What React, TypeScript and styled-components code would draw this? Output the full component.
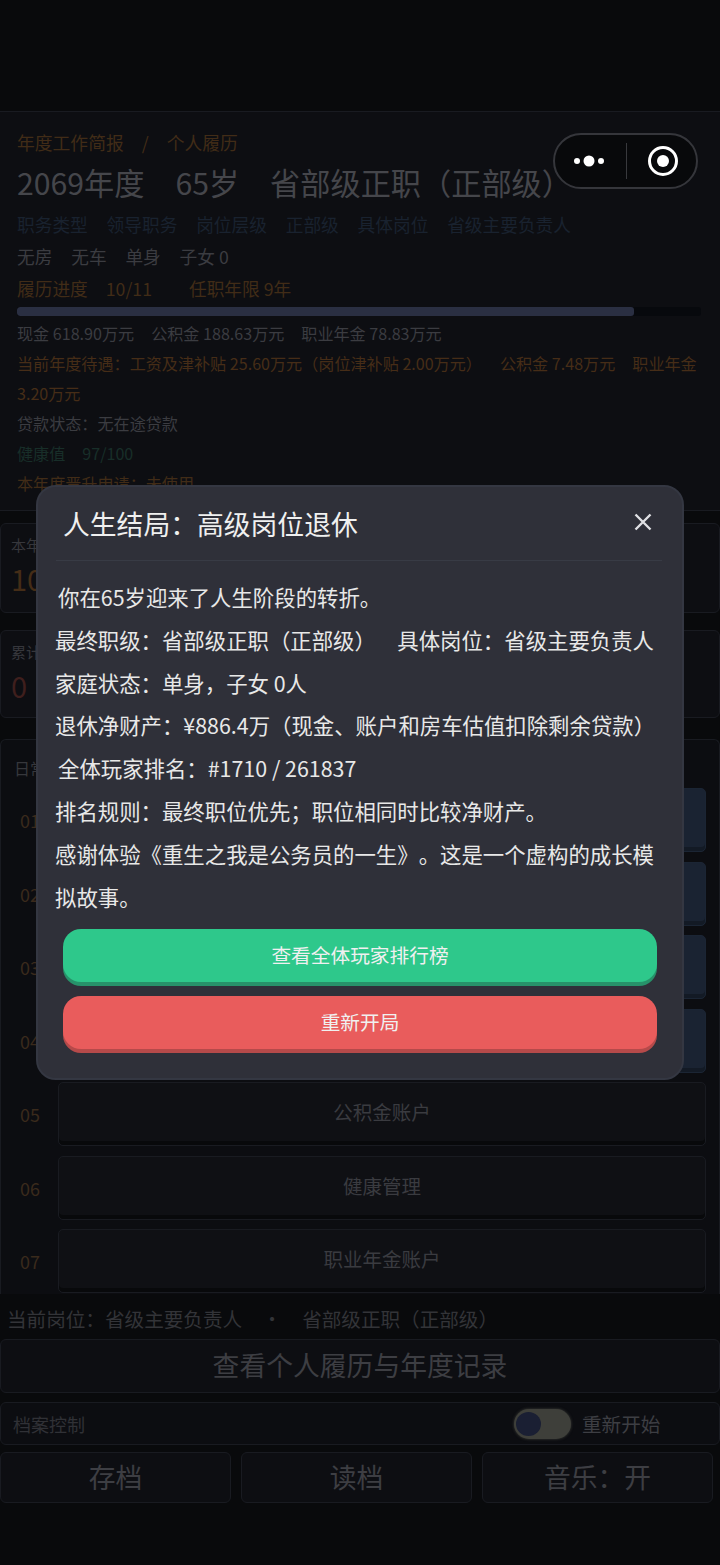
import React from "react";
import styled, { createGlobalStyle } from "styled-components";

const Global = createGlobalStyle`
  html, body { margin: 0; padding: 0; background: #090a0c; }
  * { box-sizing: border-box; }
  body { font-family: "Noto Sans CJK SC", "Noto Sans", sans-serif; text-spacing-trim: space-all; }
`;

const Page = styled.div`
  position: relative;
  width: 720px;
  height: 1565px;
  overflow: hidden;
  background: #090a0c;
  padding-top: 111px;
  display: flex;
  flex-direction: column;
`;

const ProfilePanel = styled.section`
  height: 400px;
  background: #0d0e12;
  border-top: 1px solid #191b21;
  border-bottom: 1px solid #191b21;
  padding: 15px 17px 0;
  overflow: hidden;
  flex: none;
`;

const Line = styled.div<{ $color?: string; $size?: number; $h?: number; $gap?: number }>`
  display: flex;
  gap: ${(p) => p.$gap ?? 0}px;
  white-space: pre;
  color: ${(p) => p.$color ?? "#3b3c41"};
  font-size: ${(p) => p.$size ?? 17.7}px;
  height: ${(p) => p.$h ?? 30}px;
  line-height: ${(p) => p.$h ?? 30}px;
`;

const TitleLine = styled(Line)`
  line-height: 50px;
`;

const WrapText = styled.div`
  color: #462d17;
  font-size: 16.1px;
  line-height: 30px;
  width: 686px;
`;

const Spaced = styled.span<{ $left: number }>`
  margin-left: ${(p) => p.$left}px;
`;

const Track = styled.div`
  height: 9px;
  width: 684px;
  border-radius: 3px;
  background: #07090d;
  overflow: hidden;
  margin: 3px 0 2px;
`;

const Fill = styled.div`
  height: 100%;
  background: #2a2f42;
  border-radius: 3px;
`;

const StatCard = styled.section<{ $top: number; $h: number }>`
  flex: none;
  margin-top: ${(p) => p.$top}px;
  height: ${(p) => p.$h}px;
  background: #0d0e12;
  border: 1px solid #191b21;
  border-radius: 6px;
  padding: 9px 10px;
`;

const StatLabel = styled.div`
  font-size: 15px;
  line-height: 24px;
  color: #36373c;
`;

const StatValue = styled.div<{ $color: string }>`
  font-size: 29px;
  line-height: 42px;
  color: ${(p) => p.$color};
`;

const ListPanel = styled.section`
  flex: none;
  margin-top: 21px;
  height: 555px;
  background: #0c0d11;
  border: 1px solid #191b21;
  border-bottom: 0;
  border-radius: 6px 6px 0 0;
  padding: 16px 13px 0;
  overflow: hidden;
`;

const ListTitle = styled.div`
  font-size: 16px;
  line-height: 24px;
  color: #36373c;
  margin-bottom: 8px;
`;

const Rows = styled.div`
  display: flex;
  flex-direction: column;
  gap: 9.5px;
`;

const Row = styled.div`
  display: flex;
  align-items: center;
  height: 64px;
`;

const RowNo = styled.div`
  width: 44px;
  margin-left: 6px;
  font-size: 18px;
  color: #3a2a1c;
`;

const RowButton = styled.div<{ $blue?: boolean }>`
  width: 648px;
  margin-left: -6px;
  height: 64px;
  border: 1px solid ${(p) => (p.$blue ? "#1b2534" : "#191b21")};
  border-radius: 5px;
  background: ${(p) => (p.$blue ? "#1a2332" : "#0f1014")};
  box-shadow: inset 0 -4px 0 ${(p) => (p.$blue ? "#131a25" : "#08090b")};
  display: flex;
  align-items: center;
  justify-content: center;
  padding-bottom: 5px;
  font-size: 19.5px;
  color: #3a3b40;
`;

const Current = styled.div`
  flex: none;
  height: 45px;
  line-height: 50px;
  padding-left: 7px;
  font-size: 19.6px;
  color: #333438;
  display: flex;
  align-items: flex-start;
  white-space: pre;
`;

const CurrentDot = styled.span`
  width: 60px;
  text-align: center;
`;

const WideButton = styled.div`
  flex: none;
  height: 54px;
  background: #0d0e12;
  border: 1px solid #191b21;
  border-radius: 6px;
  display: flex;
  align-items: center;
  justify-content: center;
  padding-bottom: 4px;
  font-size: 26.8px;
  color: #3d3e43;
`;

const ControlBar = styled.div`
  flex: none;
  height: 43px;
  margin-top: 9px;
  background: #0c0d11;
  border: 1px solid #191b21;
  border-radius: 6px;
  display: flex;
  align-items: center;
  padding-left: 12px;
  font-size: 18px;
  color: #303136;
`;

const Toggle = styled.div`
  margin-left: auto;
  width: 57px;
  height: 30px;
  border-radius: 15px;
  background: #3e3f3a;
  box-shadow: 0 0 3px #3e3f3a;
  padding: 3px 2px;
  flex: none;
`;

const Knob = styled.div`
  width: 25px;
  height: 24px;
  border-radius: 50%;
  background: #1a1f33;
`;

const ToggleLabel = styled.div`
  margin-left: 11px;
  width: 137px;
  font-size: 19.6px;
  color: #3d3e43;
`;

const ActionRow = styled.div`
  flex: none;
  display: flex;
  gap: 10px;
  margin-top: 7px;
  width: 713px;
`;

const ActionButton = styled.div`
  flex: 1;
  height: 51px;
  background: #0d0e12;
  border: 1px solid #191b21;
  border-radius: 6px;
  display: flex;
  align-items: center;
  justify-content: center;
  padding-bottom: 2px;
  font-size: 26.8px;
  color: #3d3e43;
`;

const Capsule = styled.div`
  position: absolute;
  left: 553px;
  top: 133px;
  width: 145px;
  height: 56px;
  border-radius: 28px;
  border: 2px solid #35363b;
  background: #08090b;
  display: flex;
  align-items: center;
`;

const CapsuleSide = styled.div<{ $right?: number }>`
  flex: none;
  width: 71px;
  height: 100%;
  padding-right: ${(p) => p.$right ?? 0}px;
  display: flex;
  align-items: center;
  justify-content: center;
`;

const CapsuleDivider = styled.div`
  flex: none;
  width: 1px;
  height: 36px;
  background: #38393d;
`;

const Modal = styled.div`
  position: absolute;
  left: 36px;
  top: 485px;
  width: 648px;
  height: 595px;
  border-radius: 20px;
  background: #2f3039;
  border: 2px solid #343742;
  padding: 0 16px;
`;

const ModalHead = styled.div`
  margin: 0 4px 0 2px;
  height: 74px;
  border-bottom: 1px solid #383b45;
  display: flex;
  align-items: center;
  justify-content: space-between;
  padding: 0 9px 3px 7px;
`;

const ModalTitle = styled.div`
  font-size: 26.8px;
  color: #f0f0f0;
  margin-top: 3px;
`;

const ModalBody = styled.div`
  margin: 15px 0 0 1px;
  font-size: 21.4px;
  line-height: 42.8px;
  color: #e8e8e8;
  width: 606px;
`;

const BodyLine = styled.div<{ $indent?: boolean }>`
  padding-left: ${(p) => (p.$indent ? 3 : 0)}px;
`;

const ModalButton = styled.div<{ $bg: string; $edge: string }>`
  width: 594px;
  height: 53px;
  margin-left: 9px;
  border-radius: 18px;
  background: ${(p) => p.$bg};
  box-shadow: 0 4px 0 ${(p) => p.$edge};
  display: flex;
  align-items: center;
  justify-content: center;
  padding-bottom: 2px;
  font-size: 19.7px;
  color: #f0f0f0;
`;

const ButtonStack = styled.div`
  margin-top: 11px;
  display: flex;
  flex-direction: column;
  gap: 14px;
`;

const rows = [
  { no: "01", label: "", blue: true },
  { no: "02", label: "", blue: true },
  { no: "03", label: "", blue: true },
  { no: "04", label: "", blue: true },
  { no: "05", label: "公积金账户" },
  { no: "06", label: "健康管理" },
  { no: "07", label: "职业年金账户" },
];

export default function App() {
  return (
    <Page>
      <Global />
      <ProfilePanel>
        <Line $color="#412c17" $gap={18} $size={17.8}>
          <span>年度工作简报</span>
          <span>/</span>
          <span>个人履历</span>
        </Line>
        <TitleLine $size={30.2} $h={52} $gap={31} $color="#45464b">
          <span>2069年度</span>
          <span>65岁</span>
          <span>省部级正职（正部级）</span>
        </TitleLine>
        <Line $color="#19222f" $h={31} $gap={18.8}>
          <span>职务类型</span>
          <span>领导职务</span>
          <span>岗位层级</span>
          <span>正部级</span>
          <span>具体岗位</span>
          <span>省级主要负责人</span>
        </Line>
        <Line $h={33} $gap={18.8}>
          <span>无房</span>
          <span>无车</span>
          <span>单身</span>
          <span>子女 0</span>
        </Line>
        <Line $color="#412c17" $h={31}>
          <span>履历进度</span>
          <Spaced $left={18}>10/11</Spaced>
          <Spaced $left={37}>任职年限 9年</Spaced>
        </Line>
        <Track>
          <Fill style={{ width: `${(617 / 684) * 100}%` }} />
        </Track>
        <Line $size={16.1} $gap={17}>
          <span>现金 618.90万元</span>
          <span>公积金 188.63万元</span>
          <span>职业年金 78.83万元</span>
        </Line>
        <WrapText>
          当前年度待遇：工资及津补贴 25.60万元（岗位津补贴 2.00万元）
          <Spaced $left={18}>公积金 7.48万元</Spaced>
          <Spaced $left={17}>职业年金</Spaced> 3.20万元
        </WrapText>
        <Line $size={16.1}>贷款状态：无在途贷款</Line>
        <Line $size={16.1} $color="#182e29" $gap={17}>
          <span>健康值</span>
          <span>97/100</span>
        </Line>
        <Line $size={16.1} $color="#412c17">本年度晋升申请：未使用</Line>
      </ProfilePanel>

      <StatCard $top={12} $h={90}>
        <StatLabel>本年</StatLabel>
        <StatValue $color="#452d17">10</StatValue>
      </StatCard>
      <StatCard $top={17} $h={88}>
        <StatLabel>累计</StatLabel>
        <StatValue $color="#3f1f1d">0</StatValue>
      </StatCard>

      <ListPanel>
        <ListTitle>日常</ListTitle>
        <Rows>
          {rows.map((r) => (
            <Row key={r.no}>
              <RowNo>{r.no}</RowNo>
              <RowButton $blue={r.blue}>{r.label}</RowButton>
            </Row>
          ))}
        </Rows>
      </ListPanel>

      <Current>
        <span>当前岗位：省级主要负责人</span>
        <CurrentDot>·</CurrentDot>
        <span>省部级正职（正部级）</span>
      </Current>
      <WideButton>查看个人履历与年度记录</WideButton>
      <ControlBar>
        档案控制
        <Toggle>
          <Knob />
        </Toggle>
        <ToggleLabel>重新开始</ToggleLabel>
      </ControlBar>
      <ActionRow>
        <ActionButton>存档</ActionButton>
        <ActionButton>读档</ActionButton>
        <ActionButton>音乐：开</ActionButton>
      </ActionRow>

      <Capsule>
        <CapsuleSide $right={4}>
          <svg width="34" height="16" viewBox="0 0 34 16">
            <circle cx="5" cy="8" r="3" fill="#fff" />
            <circle cx="17" cy="8" r="5.5" fill="#fff" />
            <circle cx="29" cy="8" r="3" fill="#fff" />
          </svg>
        </CapsuleSide>
        <CapsuleDivider />
        <CapsuleSide>
          <svg width="32" height="32" viewBox="0 0 32 32">
            <circle cx="16" cy="16" r="13.5" fill="none" stroke="#fff" strokeWidth="3" />
            <circle cx="16" cy="16" r="6" fill="#fff" />
          </svg>
        </CapsuleSide>
      </Capsule>

      <Modal>
        <ModalHead>
          <ModalTitle>人生结局：高级岗位退休</ModalTitle>
          <svg width="20" height="20" viewBox="0 0 20 20">
            <path d="M2.5 2.5 L17.5 17.5 M17.5 2.5 L2.5 17.5" stroke="#dfe0e4" strokeWidth="2.4" />
          </svg>
        </ModalHead>
        <ModalBody>
          <BodyLine $indent>你在65岁迎来了人生阶段的转折。</BodyLine>
          <BodyLine>最终职级：省部级正职（正部级）{"\u3000"}具体岗位：省级主要负责人</BodyLine>
          <BodyLine>家庭状态：单身，子女 0人</BodyLine>
          <BodyLine>退休净财产：¥886.4万（现金、账户和房车估值扣除剩余贷款）</BodyLine>
          <BodyLine $indent>全体玩家排名：#1710 / 261837</BodyLine>
          <BodyLine>排名规则：最终职位优先；职位相同时比较净财产。</BodyLine>
          <BodyLine>感谢体验《重生之我是公务员的一生》。这是一个虚构的成长模拟故事。</BodyLine>
        </ModalBody>
        <ButtonStack>
          <ModalButton $bg="#2ec88b" $edge="#27926a">查看全体玩家排行榜</ModalButton>
          <ModalButton $bg="#e95c5c" $edge="#b64a4a">重新开局</ModalButton>
        </ButtonStack>
      </Modal>
    </Page>
  );
}
